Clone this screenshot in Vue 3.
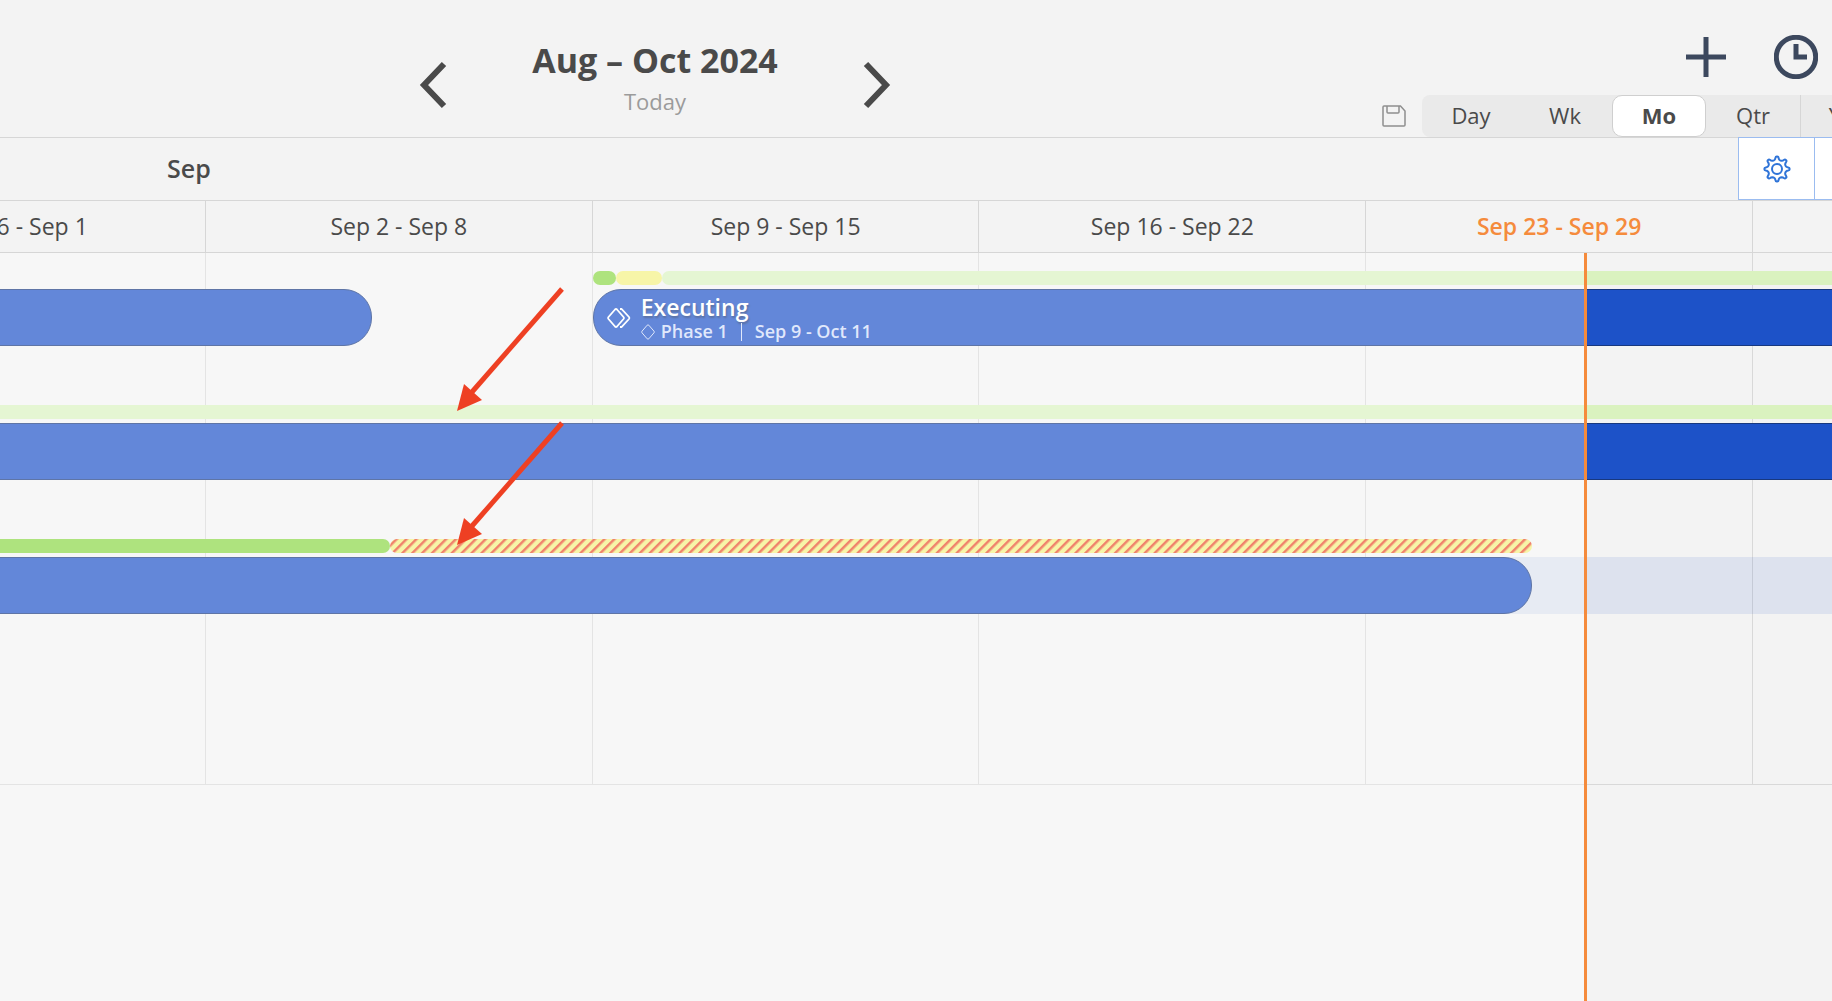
<template>
  <div class="planner">
    <header class="toolbar">
      <nav class="period">
        <button class="icon-btn" aria-label="Previous period">
          <svg width="28" height="48" viewBox="0 0 28 48"><path d="M25 3 5 24l20 21" /></svg>
        </button>
        <div class="period-text">
          <h1>Aug – Oct 2024</h1>
          <button class="today-btn">Today</button>
        </div>
        <button class="icon-btn" aria-label="Next period">
          <svg width="28" height="48" viewBox="0 0 28 48"><path d="M3 3l20 21L3 45" /></svg>
        </button>
      </nav>
      <div class="actions">
        <div class="actions-top">
          <button class="icon-btn" aria-label="Add">
            <svg width="40" height="40" viewBox="0 0 40 40"><path d="M20 0v40M0 20h40" /></svg>
          </button>
          <button class="icon-btn" aria-label="History">
            <svg width="44" height="44" viewBox="0 0 44 44">
              <circle cx="22" cy="22" r="19.7" />
              <path d="M22 9v13h11" />
            </svg>
          </button>
        </div>
        <div class="actions-bottom">
          <button class="icon-btn save" aria-label="Save view">
            <svg width="24" height="22" viewBox="0 0 24 22">
              <path d="M2 1h16.500l4.500 5v14q0 1-1 1H2q-1 0-1-1V2q0-1 1-1z" />
              <path d="M5 1v6q0 1 1 1h10q1 0 1-1V1" />
            </svg>
          </button>
          <div class="scale">
            <button
              v-for="s in scales"
              :key="s"
              :class="['scale-btn', { active: s === scale }]"
              @click="scale = s"
            >{{ s }}</button>
          </div>
        </div>
      </div>
    </header>

    <div class="months">
      <span class="month">Sep</span>
      <div class="month-tools">
        <button class="tool" aria-label="Settings">
          <svg width="28" height="28" viewBox="0 0 28 28">
            <path :d="gearPath" />
            <circle cx="14" cy="14" r="5" />
          </svg>
        </button>
        <button class="tool" aria-label="More" />
      </div>
    </div>

    <div class="weeks">
      <div
        v-for="(w, i) in weeks"
        :key="w"
        :class="['week', { current: i === 4 }]"
        :style="span(i * 7, 7)"
      >{{ w }}</div>
    </div>

    <main class="board">
      <div class="grid">
        <div class="columns">
          <div v-for="(w, i) in weeks" :key="w" class="column" :style="span(i * 7, 7)" />
        </div>
        <div v-for="(row, r) in rows" :key="r" class="row">
          <div class="load">
            <div
              v-for="(l, i) in row.load"
              :key="i"
              :class="['load-item', l.type]"
              :style="span(l.from, l.days)"
            />
          </div>
          <div :class="['lane', { booked: row.booked }]">
            <div v-for="(b, i) in row.bars" :key="i" class="bar" :style="span(b.from, b.days)">
              <template v-if="b.title">
                <svg class="bar-icon" width="24" height="22" viewBox="0 0 24 22">
                  <path d="M8 2.500q1-1 2 0l6.500 7.500q.8 1 0 2l-6.500 7.500q-1 1-2 0L1.500 12q-.8-1 0-2z" />
                  <path d="M13 2h1.500l7.500 8q.8 1 0 2l-7.500 8H13" />
                </svg>
                <div class="bar-text">
                  <strong>{{ b.title }}</strong>
                  <span class="bar-sub">
                    <svg width="14" height="16" viewBox="0 0 14 16"><path d="M6.200 1.200q.8-.8 1.600 0l5.200 6q.6.8 0 1.600l-5.200 6q-.8.8-1.600 0L1 8.800q-.6-.8 0-1.600z" /></svg>
                    {{ b.phase }}<i class="sep" />{{ b.dates }}
                  </span>
                </div>
              </template>
            </div>
          </div>
        </div>
      </div>
      <div class="past" :style="{ width: `${today}%` }" />
      <div class="now" :style="{ left: `${today}%` }" />
      <svg v-for="n in 2" :key="n" :class="['arrow', `arrow-${n}`]" width="112" height="128" viewBox="0 0 112 128">
        <path class="shaft" d="M107 4 17 107" />
        <path class="head" d="M2 126l7-27 18 16z" />
      </svg>
    </main>
  </div>
</template>

<script setup>
import { ref } from 'vue'

const scales = ['Day', 'Wk', 'Mo', 'Qtr', 'Yr']
const scale = ref('Mo')

const weeks = [
  'Aug 26 - Sep 1',
  'Sep 2 - Sep 8',
  'Sep 9 - Sep 15',
  'Sep 16 - Sep 22',
  'Sep 23 - Sep 29',
  ''
]

// days are counted from Aug 26, one day takes DAY percent of the view
const DAY = 3.016
const ORIGIN = -9.87
const today = ORIGIN + 31.94 * DAY

const rows = [
  {
    load: [
      { from: 14, days: 0.42, type: 'mid' },
      { from: 14.42, days: 0.83, type: 'full' },
      { from: 15.25, days: 25, type: 'low' }
    ],
    bars: [
      { from: -7, days: 17 },
      { from: 14, days: 33, title: 'Executing', phase: 'Phase 1', dates: 'Sep 9 - Oct 11' }
    ]
  },
  {
    load: [{ from: -7, days: 60, type: 'low' }],
    bars: [{ from: -7, days: 60 }]
  },
  {
    load: [
      { from: -7, days: 17.33, type: 'mid' },
      { from: 10.33, days: 20.67, type: 'over' }
    ],
    bars: [{ from: -7, days: 38 }],
    booked: true
  }
]

function span(from, days) {
  return { left: `${ORIGIN + from * DAY}%`, width: `${days * DAY}%` }
}

// eight rounded teeth around the centre of a 28px box
function gear() {
  const pt = (r, deg) => {
    const a = (deg * Math.PI) / 180
    return `${(14 + r * Math.sin(a)).toFixed(2)} ${(14 - r * Math.cos(a)).toFixed(2)}`
  }
  let d = `M${pt(9.4, -15)}`
  for (let i = 0; i < 8; i++) {
    const c = i * 45
    d += `Q${pt(10.2, c - 9)} ${pt(11.3, c - 8)}Q${pt(12.8, c - 6)} ${pt(12.6, c)}`
    d += `Q${pt(12.8, c + 6)} ${pt(11.3, c + 8)}Q${pt(10.2, c + 9)} ${pt(9.4, c + 15)}`
    d += `Q${pt(8.8, c + 22.5)} ${pt(9.4, c + 30)}`
  }
  return d + 'z'
}
const gearPath = gear()
</script>

<style>
body {
  margin: 0;
}
</style>

<style scoped>
.planner {
  display: flex;
  flex-direction: column;
  min-height: 100vh;
  overflow: hidden;
  background: #f3f3f3;
  color: #4a4a4a;
  font-family: 'Open Sans', sans-serif;
  font-size: 22px;
}
.planner * {
  box-sizing: border-box;
}
button {
  padding: 0;
  border: 0;
  background: none;
  color: inherit;
  font: inherit;
  cursor: pointer;
}
svg {
  display: block;
  fill: none;
  stroke: currentColor;
}

/* toolbar */
.toolbar {
  display: flex;
  justify-content: space-between;
  height: 138px;
  padding-left: 419px;
  border-bottom: 1px solid #d6d6d6;
}
.period {
  display: flex;
  align-items: flex-start;
  justify-content: space-between;
  width: 472px;
  padding-top: 36px;
}
.period .icon-btn {
  margin-top: 25px;
  stroke-width: 6;
}
.period-text {
  display: flex;
  flex-direction: column;
  align-items: center;
}
h1 {
  margin: 0;
  font-size: 34px;
  line-height: 48px;
  font-weight: 700;
}
.today-btn {
  line-height: 34px;
  color: #9b9b9b;
}
.actions {
  display: flex;
  flex-direction: column;
  justify-content: space-between;
  margin-right: -46px;
}
.actions-top {
  display: flex;
  align-items: center;
  justify-content: flex-end;
  gap: 48px;
  padding: 35px 60px 0 0;
  color: #3c485e;
  stroke-width: 5;
}
.actions-bottom {
  display: flex;
  align-items: center;
  gap: 16px;
}
.save {
  color: #8f8f8f;
  stroke-width: 1.5;
}
.scale {
  display: flex;
  padding-left: 2px;
  border-radius: 8px;
  background: #eaeaea;
}
.scale-btn {
  width: 94px;
  height: 42px;
  padding-bottom: 2px;
}
.scale-btn:last-child {
  width: 78px;
  border-left: 1px solid #d6d6d6;
}
.scale-btn.active {
  border: 1px solid #cfcfcf;
  border-radius: 10px;
  background: #fff;
  font-weight: 700;
}

/* timeline header */
.months {
  display: flex;
  align-items: center;
  justify-content: space-between;
  height: 63px;
  padding-left: 167px;
  border-bottom: 1px solid #d6d6d6;
}
.month {
  padding-bottom: 2px;
  font-size: 25px;
  font-weight: 600;
}
.month-tools {
  display: flex;
  align-self: stretch;
  margin: -1px -58px 0 0;
  border: 1px solid #9bbcf0;
  background: #fff;
  color: #2f74d8;
}
.tool {
  display: flex;
  align-items: center;
  justify-content: center;
  width: 75px;
  stroke-width: 2;
}
.tool + .tool {
  border-left: 1px solid #9bbcf0;
}
.weeks {
  position: relative;
  height: 52px;
  border-bottom: 1px solid #d6d6d6;
}
.week {
  position: absolute;
  height: 51px;
  border-right: 1px solid #d6d6d6;
  font-size: 23px;
  line-height: 51px;
  text-align: center;
}
.week.current {
  color: #f58b3c;
  font-weight: 600;
}

/* board */
.board {
  position: relative;
  flex: 1;
  background: #f3f3f3;
}
.grid {
  position: relative;
  min-height: 532px;
  padding-top: 18px;
  border-bottom: 1px solid #d8d8d8;
}
.column {
  position: absolute;
  top: 0;
  bottom: 0;
  border-right: 1px solid #d8d8d8;
}
.row {
  position: relative;
  height: 134px;
}
.load {
  position: relative;
  height: 14px;
  margin-bottom: 4px;
}
.load-item {
  position: absolute;
  height: 14px;
  border-radius: 7px;
}
.low {
  background: #daf2bf;
}
.mid {
  background: #8ad745;
}
.full {
  background: #f4f181;
}
.over {
  background: repeating-linear-gradient(135deg, #f4f181 0 3px, #e94a2a 4px 5px, #f4f181 7px);
}
.lane {
  position: relative;
  height: 57px;
}
.booked {
  background: rgba(29, 82, 200, 0.1);
}
.bar {
  position: absolute;
  display: flex;
  align-items: center;
  height: 57px;
  padding-left: 13px;
  border: 1px solid #18387f;
  border-radius: 28px;
  background: #1d52c8;
  color: #fff;
}
.bar-icon {
  stroke-width: 1.800;
}
.bar-text {
  display: flex;
  flex-direction: column;
  margin-left: 10px;
  padding-top: 2px;
}
.bar-text strong {
  font-size: 23px;
  line-height: 26px;
  font-weight: 600;
  text-shadow: 1px 2px 2px rgba(0, 0, 0, 0.4);
}
.bar-sub {
  display: flex;
  align-items: center;
  gap: 6px;
  color: #d3defa;
  font-size: 18px;
  line-height: 23px;
  font-weight: 600;
}
.sep {
  width: 1px;
  height: 18px;
  margin: 0 7px;
  background: #d3defa;
}

/* everything before today is faded */
.past {
  position: absolute;
  top: 0;
  bottom: 0;
  left: 0;
  background: rgba(255, 255, 255, 0.31);
}
.now {
  position: absolute;
  top: 0;
  bottom: 0;
  width: 3px;
  background: #f58b3c;
}
.arrow {
  position: absolute;
  left: 455px;
  color: #ee4023;
}
.arrow-1 {
  top: 32px;
}
.arrow-2 {
  top: 166px;
}
.shaft {
  stroke-width: 5;
}
.head {
  fill: currentColor;
  stroke: none;
}
</style>
